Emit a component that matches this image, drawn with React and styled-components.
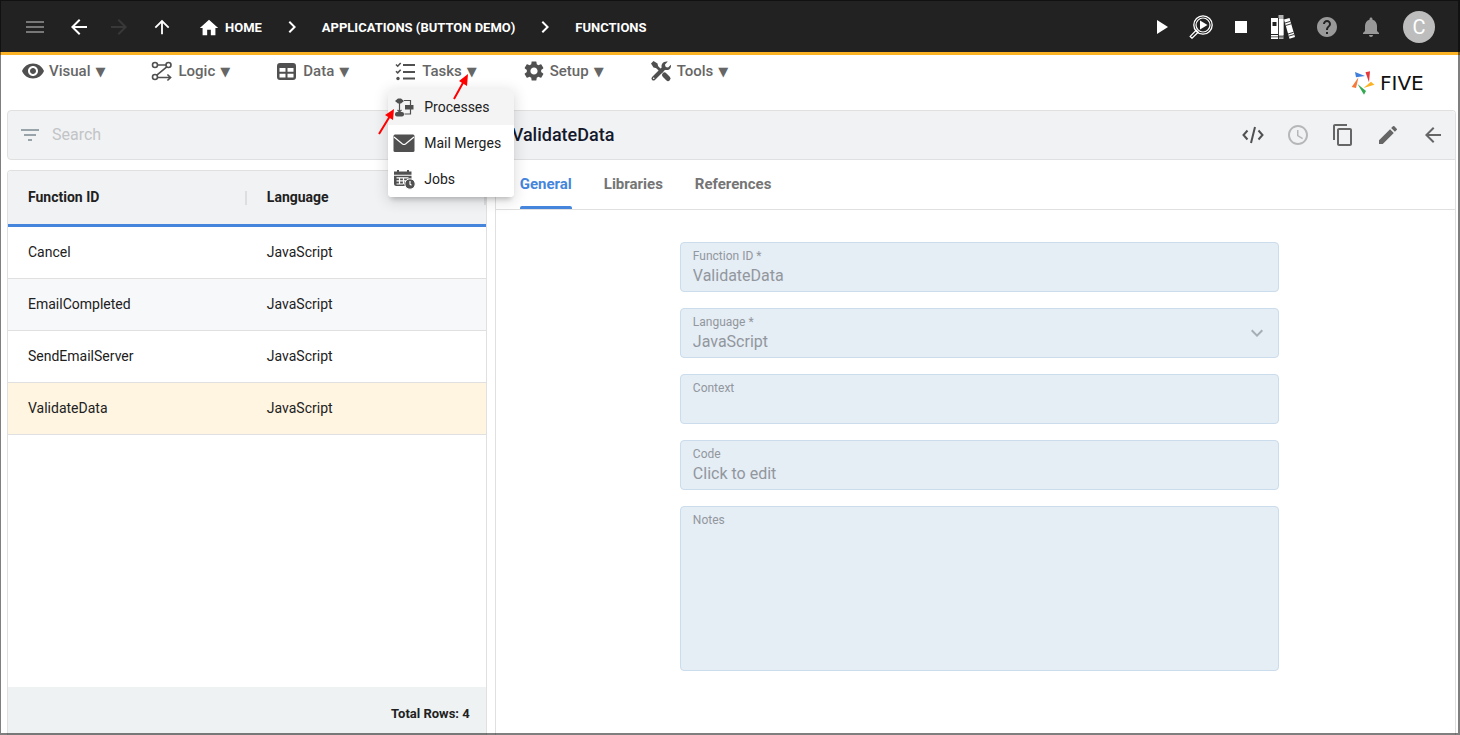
import React from "react";
import styled, { createGlobalStyle } from "styled-components";
import {
  MdMenu, MdArrowBack, MdArrowForward, MdArrowUpward, MdHome, MdChevronRight, MdPlayArrow,
  MdStop, MdHelp, MdNotifications, MdFilterList, MdSchedule, MdContentCopy, MdEdit,
  MdVisibility, MdSettings, MdKeyboardArrowDown,
} from "react-icons/md";

const GlobalStyle = createGlobalStyle`
  *, *::before, *::after { box-sizing: border-box; }
  body {
    margin: 0;
    background: #fff;
    color: #212121;
    font-family: Roboto, "Liberation Sans", sans-serif;
    font-size: 14px;
  }
  button, input, select, textarea { font: inherit; color: inherit; }
`;

const Page = styled.div`
  display: flex;
  flex-direction: column;
  min-height: 100vh;
  position: relative;
  &::after {
    content: "";
    position: absolute;
    inset: 0;
    border: solid rgba(0, 0, 0, 0.5);
    border-width: 1px 2px 2px 1px;
    pointer-events: none;
  }
`;

const TopBar = styled.header`
  display: flex;
  align-items: center;
  height: 55px;
  padding: 2px 25px 0 23px;
  background: #222;
  border-bottom: 3px solid #fbb325;
  color: #fff;
`;

const Group = styled.div`
  display: flex;
  align-items: center;
  gap: ${(p) => p.$gap}px;
  margin-left: ${(p) => p.$before || 0}px;
`;

const Spacer = styled.div`
  flex: 1;
`;

const IconButton = styled.button`
  display: flex;
  flex: none;
  padding: 0;
  border: 0;
  background: none;
  color: ${(p) => p.$color || "inherit"};
`;

const Crumbs = styled.nav`
  display: flex;
  align-items: center;
  gap: 18px;
  margin-left: 25px;
`;

const Crumb = styled.a`
  display: flex;
  align-items: center;
  gap: 5px;
  padding-top: 2px;
  color: #fff;
  font-size: 13px;
  font-weight: 700;
  line-height: 24px;
  white-space: nowrap;
  text-decoration: none;
`;

const Avatar = styled.button`
  width: 32px;
  height: 32px;
  padding: 0;
  border: 0;
  border-radius: 50%;
  background: #bdbdbd;
  color: #fff;
  font-size: 20px;
  line-height: 32px;
`;

const MenuBar = styled.div`
  display: flex;
  align-items: flex-start;
  height: 55px;
  padding: 3px 22px 0 21px;
`;

const MenuItem = styled.div`
  position: relative;
`;

const MenuButton = styled.button`
  display: flex;
  align-items: center;
  height: 26px;
  padding: 0;
  border: 0;
  background: none;
  color: #666;
  font-size: 15px;
  font-weight: 500;
  svg { color: #505050; margin-right: 4px; }
`;

const Caret = styled.span`
  margin-left: 5px;
  font-family: "DejaVu Sans", sans-serif;
  font-size: 13px;
`;

const Dropdown = styled.div`
  position: absolute;
  z-index: 2;
  top: 31px;
  left: -6px;
  width: 126px;
  border-radius: 4px;
  background: #fff;
  box-shadow: 0 5px 5px -3px rgba(0, 0, 0, 0.2), 0 3px 14px 2px rgba(0, 0, 0, 0.12);
  overflow: hidden;
`;

const DropdownItem = styled.button`
  display: flex;
  align-items: center;
  gap: 8px;
  width: 100%;
  height: 36px;
  padding: 0 4px;
  border: 0;
  background: ${(p) => (p.$active ? "#f4f4f4" : "#fff")};
  font-size: 14px;
  white-space: nowrap;
  svg { color: #505050; }
`;

const Pointers = styled.svg`
  position: absolute;
  z-index: 3;
  top: 13px;
  left: -18px;
  pointer-events: none;
`;

const Logo = styled.a`
  display: flex;
  align-items: center;
  gap: 5px;
  margin-top: 13px;
  color: #111;
  font-family: "DejaVu Sans", sans-serif;
  font-size: 20px;
  line-height: 24px;
  text-decoration: none;
`;

const Wordmark = styled.span`
  min-width: 58px;
`;

const Main = styled.main`
  display: flex;
  flex: 1;
  gap: 8px;
  padding: 0 4px 0 7px;
`;

const ListPane = styled.section`
  display: flex;
  flex: 1 1 0;
  flex-direction: column;
  gap: 10px;
  min-width: 0;
`;

const SearchBox = styled.label`
  display: flex;
  align-items: center;
  gap: 10px;
  height: 50px;
  padding: 0 10px;
  border: 1px solid #e0e0e0;
  border-radius: 4px;
  background: #f1f2f4;
  color: #98a3aa;
`;

const SearchInput = styled.input`
  flex: 1;
  min-width: 0;
  padding: 0 0 2px;
  border: 0;
  outline: 0;
  background: none;
  font-size: 16px;
  &::placeholder { color: #c2c4c6; opacity: 1; }
`;

const ListCard = styled.div`
  display: flex;
  flex: 1;
  flex-direction: column;
  border: 1px solid #e0e0e0;
  border-bottom: 0;
  border-radius: 4px 4px 0 0;
  overflow: hidden;
`;

const Table = styled.table`
  width: 100%;
  table-layout: fixed;
  border-collapse: separate;
  border-spacing: 0;
`;

const HeadCell = styled.th`
  height: 56px;
  padding: 0 0 0 20px;
  background: #f1f2f4;
  border-bottom: 3px solid #4585dc;
  font-weight: 700;
  text-align: left;
`;

const HeadInner = styled.div`
  height: 14px;
  border-right: 2px solid #dcdee0;
  line-height: 12px;
`;

const Row = styled.tr`
  background: #fff;
  &:nth-child(even) { background: #f7f8fa; }
  &[aria-selected="true"] { background: #fff5e1; }
`;

const Cell = styled.td`
  height: 52px;
  padding: 0 20px 2px;
  border-bottom: 1px solid #e0e0e0;
`;

const ListFooter = styled.footer`
  height: 48px;
  margin-top: auto;
  padding: 14px 16px 0;
  background: #eef2f3;
  font-size: 13px;
  font-weight: 700;
  line-height: 26px;
  text-align: right;
`;

const DetailPane = styled.section`
  flex: 2 1 0;
  min-width: 0;
  border: 1px solid #e0e0e0;
  border-bottom: 0;
  border-radius: 4px 4px 0 0;
`;

const DetailHeader = styled.div`
  display: flex;
  align-items: center;
  height: 49px;
  padding: 0 10px 0 16px;
  background: #f1f2f4;
  border-bottom: 1px solid #e0e0e0;
  border-radius: 4px 4px 0 0;
  color: #666;
`;

const Title = styled.h1`
  flex: 1;
  margin: 0;
  padding-bottom: 2px;
  color: #14192b;
  font-size: 18px;
  font-weight: 500;
`;

const Tabs = styled.div`
  display: flex;
  gap: 32px;
  height: 50px;
  padding: 0 24px;
  border-bottom: 1px solid #e0e0e0;
`;

const Tab = styled.button`
  position: relative;
  padding: 0 0 2px;
  border: 0;
  background: none;
  color: ${(p) => (p.$active ? "#4585dc" : "#757575")};
  font-size: 15px;
  font-weight: 700;
  &::after {
    content: "";
    display: ${(p) => (p.$active ? "block" : "none")};
    position: absolute;
    inset: auto 0 0;
    height: 3px;
    border-radius: 2px 2px 0 0;
    background: #4585dc;
  }
`;

const Form = styled.form`
  display: flex;
  flex-direction: column;
  align-items: center;
  gap: 16px;
  padding: 32px 16px 32px 24px;
`;

const Field = styled.div`
  display: flex;
  flex-direction: column;
  position: relative;
  width: 100%;
  max-width: 599px;
  height: ${(p) => (p.$tall ? 165 : 50)}px;
  padding: 5px 12px 3px;
  border: 1px solid #cbdcec;
  border-radius: 4px;
  background: #e5edf5;
  color: #92979d;
  label { font-size: 12px; line-height: 16px; }
  input, select, textarea {
    width: 100%;
    height: 24px;
    padding: 0;
    border: 0;
    background: none;
    color: inherit;
    font-size: 16px;
    line-height: 24px;
    opacity: 1;
    appearance: none;
    resize: none;
  }
  textarea { flex: 1; }
  svg { position: absolute; right: 9px; top: 12px; color: #a6aeb5; pointer-events: none; }
`;

function LogicIcon() {
  return (
    <svg width="24" height="24" viewBox="0 0 24 24" fill="none" stroke="currentColor" strokeWidth="1.6">
      <circle cx="5" cy="6" r="2.5" /><circle cx="18.5" cy="6" r="2.5" /><circle cx="5" cy="18" r="2.5" />
      <path d="M7.5 6H16M16.8 7.8 6.8 16.200M7.5 18.500h13M17.400 15.500l3.200 3-3.200 3" />
    </svg>
  );
}

function TableIcon() {
  return (
    <svg width="24" height="24" viewBox="0 0 24 24" fill="currentColor" fillRule="evenodd">
      <path d="M5 4h13a3 3 0 0 1 3 3v11a3 3 0 0 1-3 3H5a3 3 0 0 1-3-3V7a3 3 0 0 1 3-3ZM4.500 9v3.800H10.500V9Zm8 0v3.800h6V9ZM4.500 14.800V18.500H10.500v-3.700Zm8 0v3.700h6v-3.700Z" />
    </svg>
  );
}

function TasksIcon() {
  return (
    <svg width="24" height="24" viewBox="0 0 24 24" fill="none" stroke="currentColor" strokeWidth="2">
      <path d="M9 6h12M9 13h12M9 19.500h12" />
      <path strokeWidth="1.600" d="m2 5.500 1.700 1.700 3-3.200M2 12.200l1.700 1.700 3-3.200" />
      <circle cx="4" cy="19.500" r="1.700" fill="currentColor" stroke="none" />
    </svg>
  );
}

function ToolsIcon() {
  return (
    <svg width="24" height="24" viewBox="0 0 24 24" fill="none" stroke="currentColor">
      <path strokeWidth="2.600" d="m5.500 5.500 8 8" />
      <path strokeWidth="5" strokeLinecap="round" d="m15.500 16 3.500 3.500" />
      <path fill="currentColor" stroke="none" d="m2 4.500 2.500-2.500 4 2.500 .700 3.500-1.200 1.200-3.500-.700Z" />
      <path strokeWidth="4" strokeLinecap="round" d="M4.500 19.500 15 9" />
      <path fill="currentColor" stroke="none" d="M18.800 2.600 16 5.400l.500 2.600 2.600.500 2.800-2.800c.700 3.300-1.800 6-5.400 5.200L12.700 8.200c-1-3.400 2.300-6.600 6.100-5.600Z" />
      <circle cx="4.700" cy="19.300" r=".8" fill="#fff" stroke="none" />
    </svg>
  );
}

function ProcessIcon() {
  return (
    <svg width="24" height="24" viewBox="0 0 24 24" fill="currentColor">
      <path d="M6 3.500h3L12 6 9 8.500H6L3 6ZM13 10h8.500v4.500H13Z" />
      <rect x="3" y="17" width="9" height="4.500" rx="2" />
      <path fill="none" stroke="currentColor" strokeWidth="1.200" d="M7.500 8v9M5.500 15l2 2 2-2M12 5.500h6.500V10M18.500 14v5h-6" />
    </svg>
  );
}

function MailIcon() {
  return (
    <svg width="24" height="24" viewBox="0 0 24 24">
      <rect x="1.500" y="3.500" width="21" height="17.500" rx="1.500" fill="currentColor" />
      <path d="m2 6 8.500 7q1.500 1 3 0L22 6" fill="none" stroke="#fff" strokeWidth="1.200" />
    </svg>
  );
}

function JobsIcon() {
  return (
    <svg width="24" height="24" viewBox="0 0 24 24">
      <path fill="currentColor" d="M5 3h2v1.500h8V3h2v1.500h2.500v3.200H2V4.500h3ZM2 8.800h17.500v4.700L15 19H4.500A2.500 2.500 0 0 1 2 16.500Z" />
      <path stroke="#fff" strokeWidth="1.200" fill="none" d="M4.500 10.800h12M4.500 13.900h10M7.500 10.500v6.500M11.500 10.500v6.500M4.500 17h7" />
      <circle cx="18" cy="17" r="5.200" fill="currentColor" stroke="#fff" strokeWidth="1" />
      <path d="M18 14v3.200l1.500 1" stroke="#fff" strokeWidth="1.200" fill="none" />
    </svg>
  );
}

function InspectIcon() {
  return (
    <svg width="24" height="24" viewBox="0 0 24 24" fill="none" stroke="#fff">
      <circle cx="14" cy="10" r="9.200" strokeWidth="1.300" />
      <circle cx="14" cy="10" r="7" strokeWidth="1.200" />
      <path d="m11 5.500 7.500 4.500-7.500 4.500Z" fill="#fff" stroke="none" />
      <path d="m7.200 15.200 2 2L3 23.200 1.200 21.400Z" strokeWidth="1.300" />
    </svg>
  );
}

function BooksIcon() {
  return (
    <svg width="24" height="24" viewBox="0 0 24 24">
      <path fill="#fff" d="M0 3h7v21H0ZM13 4.500 18.500 3 24 22l-5.500 1.800Z" />
      <path fill="#b5b5b5" d="M7.500 0H12.500v24h-5Z" />
      <path fill="#fff" d="M7.500 4h5v16h-5Z" />
      <path fill="#222" d="M1.500 7h4v4h-4ZM0 19h7v1H0ZM0 21.500h12.500v.8H0ZM7 3h.8v21H7Z" />
      <path stroke="#222" strokeWidth=".9" d="m14 8 5.500-1.700M14.700 10.500l5.500-1.700M17 19l5.500-1.700M17.700 21.200l5.600-1.700" />
    </svg>
  );
}

function CodeIcon() {
  return (
    <svg width="24" height="24" viewBox="0 0 24 24" fill="none" stroke="#505050" strokeWidth="2">
      <path d="M6.500 7.500 2.500 12l4 4.500M17.500 7.500l4 4.500-4 4.500M14 4l-4 16" />
    </svg>
  );
}

function FiveMark() {
  return (
    <svg width="24" height="24" viewBox="0 0 24 24">
      <path fill="#3f7fdb" d="m4 1 10 4-9 1.200Z" />
      <path fill="#e5383b" d="m14.500 1.200 4.500-1-1 11Z" />
      <path fill="#fbb325" d="m12.500 17 7.500-6.200 3.500 3Z" />
      <path fill="#35a853" d="m6.500 13 8.500 7-2 3.800Z" />
      <path fill="#f5793a" d="M7.500 6.200 5 17l-4.300-1Z" />
    </svg>
  );
}

const menus = [
  { name: "Visual", icon: <MdVisibility size={24} /> },
  { name: "Logic", icon: <LogicIcon /> },
  { name: "Data", icon: <TableIcon /> },
  { name: "Tasks", icon: <TasksIcon />, open: true },
  { name: "Setup", icon: <MdSettings size={24} /> },
  { name: "Tools", icon: <ToolsIcon /> },
];

const functions = ["Cancel", "EmailCompleted", "SendEmailServer", "ValidateData"];

function TasksMenu() {
  return (
    <>
      <Dropdown role="menu">
        <DropdownItem role="menuitem" $active><ProcessIcon />Processes</DropdownItem>
        <DropdownItem role="menuitem"><MailIcon />Mail Merges</DropdownItem>
        <DropdownItem role="menuitem"><JobsIcon />Jobs</DropdownItem>
      </Dropdown>
      <Pointers width="100" height="68" viewBox="0 0 100 68" stroke="#f00" fill="#f00" aria-hidden="true">
        <path strokeWidth="2" d="M78 28 88 10M3 63l11-18" />
        <path stroke="none" d="m92 3-1 12-8-5ZM18 38l-1 11-8-5Z" />
      </Pointers>
    </>
  );
}

export default function App() {
  return (
    <Page>
      <GlobalStyle />
      <TopBar>
        <Group $gap={20}>
          <IconButton aria-label="Menu" $color="#777"><MdMenu size={24} /></IconButton>
          <Group $gap={16}>
            <IconButton aria-label="Back"><MdArrowBack size={24} /></IconButton>
            <IconButton aria-label="Forward" $color="#383838"><MdArrowForward size={24} /></IconButton>
          </Group>
          <IconButton aria-label="Up"><MdArrowUpward size={22} /></IconButton>
        </Group>
        <Crumbs>
          <Crumb href="#home"><MdHome size={22} />HOME</Crumb>
          <MdChevronRight size={24} />
          <Crumb href="#applications">APPLICATIONS (BUTTON DEMO)</Crumb>
          <MdChevronRight size={24} />
          <Crumb href="#functions">FUNCTIONS</Crumb>
        </Crumbs>
        <Spacer />
        <Group $gap={16}>
          <IconButton aria-label="Run"><MdPlayArrow size={24} /></IconButton>
          <IconButton aria-label="Inspect"><InspectIcon /></IconButton>
          <IconButton aria-label="Stop"><MdStop size={24} /></IconButton>
        </Group>
        <Group $gap={20} $before={18}>
          <IconButton aria-label="Library"><BooksIcon /></IconButton>
          <IconButton aria-label="Help" $color="#999"><MdHelp size={24} /></IconButton>
          <IconButton aria-label="Notifications" $color="#999"><MdNotifications size={24} /></IconButton>
          <Avatar>C</Avatar>
        </Group>
      </TopBar>

      <MenuBar>
        <Group $gap={45}>
          {menus.map((m) => (
            <MenuItem key={m.name}>
              <MenuButton>{m.icon}{m.name}<Caret>▼</Caret></MenuButton>
              {m.open && <TasksMenu />}
            </MenuItem>
          ))}
        </Group>
        <Spacer />
        <Logo href="#five"><FiveMark /><Wordmark>FIVE</Wordmark></Logo>
      </MenuBar>

      <Main>
        <ListPane>
          <SearchBox>
            <MdFilterList size={24} />
            <SearchInput type="text" placeholder="Search" aria-label="Search" />
          </SearchBox>
          <ListCard>
            <Table>
              <thead>
                <tr>
                  <HeadCell><HeadInner>Function ID</HeadInner></HeadCell>
                  <HeadCell><HeadInner>Language</HeadInner></HeadCell>
                </tr>
              </thead>
              <tbody>
                {functions.map((name) => (
                  <Row key={name} aria-selected={name === "ValidateData"}>
                    <Cell>{name}</Cell>
                    <Cell>JavaScript</Cell>
                  </Row>
                ))}
              </tbody>
            </Table>
            <ListFooter>Total Rows: 4</ListFooter>
          </ListCard>
        </ListPane>

        <DetailPane>
          <DetailHeader>
            <Title>ValidateData</Title>
            <Group $gap={21}>
              <IconButton aria-label="Code"><CodeIcon /></IconButton>
              <IconButton aria-label="History" $color="#b5b7b9"><MdSchedule size={24} /></IconButton>
              <IconButton aria-label="Copy"><MdContentCopy size={24} /></IconButton>
              <IconButton aria-label="Edit"><MdEdit size={24} /></IconButton>
              <IconButton aria-label="Close"><MdArrowBack size={24} /></IconButton>
            </Group>
          </DetailHeader>
          <Tabs role="tablist">
            <Tab role="tab" aria-selected="true" $active>General</Tab>
            <Tab role="tab">Libraries</Tab>
            <Tab role="tab">References</Tab>
          </Tabs>
          <Form>
            <Field>
              <label htmlFor="functionId">Function ID *</label>
              <input id="functionId" defaultValue="ValidateData" readOnly />
            </Field>
            <Field>
              <label htmlFor="language">Language *</label>
              <select id="language" defaultValue="JavaScript"><option>JavaScript</option></select>
              <MdKeyboardArrowDown size={24} />
            </Field>
            <Field>
              <label htmlFor="context">Context</label>
              <input id="context" readOnly />
            </Field>
            <Field>
              <label htmlFor="code">Code</label>
              <input id="code" defaultValue="Click to edit" readOnly />
            </Field>
            <Field $tall>
              <label htmlFor="notes">Notes</label>
              <textarea id="notes" readOnly />
            </Field>
          </Form>
        </DetailPane>
      </Main>
    </Page>
  );
}
